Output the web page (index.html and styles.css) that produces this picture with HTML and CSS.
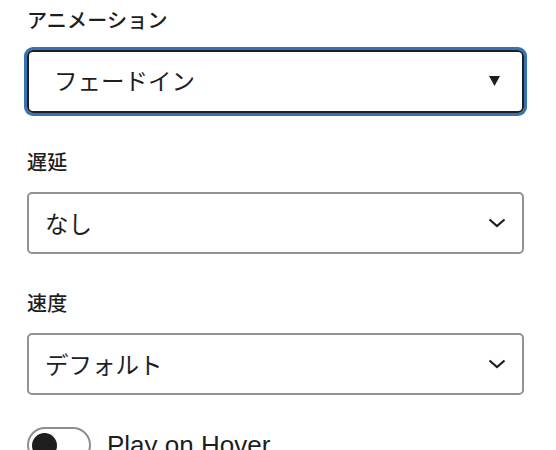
FILE: index.html
```html
<!DOCTYPE html>
<html lang="ja">
<head>
<meta charset="utf-8">
<link rel="stylesheet" href="styles.css">
</head>
<body>
<div class="panel">
  <div class="field">
    <div class="label">アニメーション</div>
    <div class="select focused">
      <span class="value">フェードイン</span>
      <svg class="tri" width="11" height="10" viewBox="0 0 11 10"><polygon points="0,0 11,0 5.5,10" fill="#1e1e1e"/></svg>
    </div>
  </div>
  <div class="field">
    <div class="label">遅延</div>
    <div class="select">
      <span class="value">なし</span>
      <svg class="chev" width="18" height="10" viewBox="0 0 18 10"><path d="M1.5 1.5 L9 8 L16.5 1.5" fill="none" stroke="#1e1e1e" stroke-width="2.2"/></svg>
    </div>
  </div>
  <div class="field">
    <div class="label">速度</div>
    <div class="select">
      <span class="value">デフォルト</span>
      <svg class="chev" width="18" height="10" viewBox="0 0 18 10"><path d="M1.5 1.5 L9 8 L16.5 1.5" fill="none" stroke="#1e1e1e" stroke-width="2.2"/></svg>
    </div>
  </div>
  <div class="toggle-row">
    <span class="toggle"><span class="knob"></span></span>
    <span class="toggle-label">Play on Hover</span>
  </div>
</div>
</body>
</html>
```
FILE: styles.css
```css
html, body {
  margin: 0;
  padding: 0;
  background: #ffffff;
}
body {
  font-family: "Noto Sans CJK JP", "Liberation Sans", sans-serif;
  color: #1e1e1e;
  width: 556px;
  height: 450px;
  overflow: hidden;
}
.panel {
  padding: 6px 32px 0 27px;
  display: flex;
  flex-direction: column;
}
.field {
  display: flex;
  flex-direction: column;
  gap: 16px;
  margin-bottom: 35px;
}
.label {
  font-size: 20px;
  line-height: 28px;
  font-weight: 500;
  letter-spacing: 0.2px;
}
.select {
  box-sizing: border-box;
  height: 62px;
  border: 2px solid #929292;
  border-radius: 5px;
  display: flex;
  align-items: center;
  justify-content: space-between;
  padding: 0 16px 0 16px;
}
.select.focused {
  height: 63px;
  border-color: #1e1e1e;
  box-shadow: 0 0 0 3px #3673b3;
  border-radius: 6px;
  padding: 0 22px 0 25px;
}
.value {
  font-size: 23.5px;
  line-height: 30px;
}
.focused .value {
  margin-top: -4px;
}
.tri {
  display: block;
  margin-top: -2px;
}
.chev {
  display: block;
}
.toggle-row {
  margin-top: -3px;
  display: flex;
  align-items: center;
  gap: 16px;
}
.toggle {
  box-sizing: border-box;
  width: 64px;
  height: 36px;
  border: 2px solid #8f8f8f;
  border-radius: 18px;
  display: flex;
  align-items: center;
  padding-left: 3px;
}
.knob {
  width: 25px;
  height: 25px;
  border-radius: 50%;
  background: #1e1e1e;
}
.toggle-label {
  font-family: "Liberation Sans", Arial, sans-serif;
  font-size: 26px;
  line-height: 36px;
}
```
